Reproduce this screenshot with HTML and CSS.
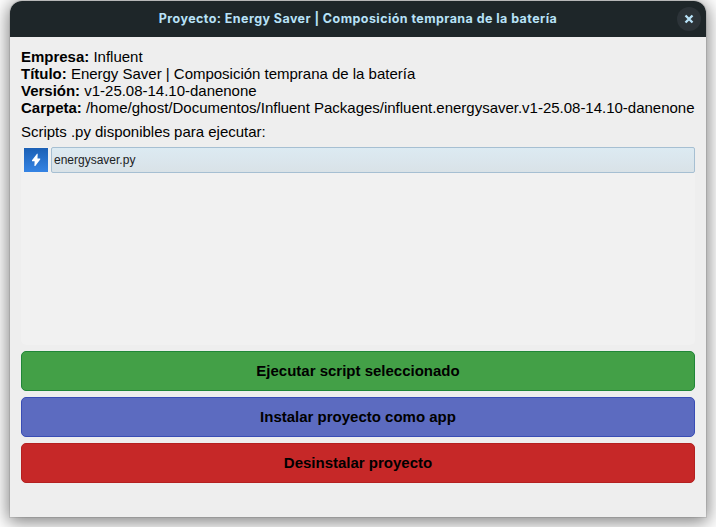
FILE: index.html
```html
<!DOCTYPE html>
<html lang="es">
<head>
<meta charset="utf-8">
<title>Energy Saver</title>
<link rel="stylesheet" href="styles.css">
</head>
<body>
<main class="window">
  <header class="titlebar">
    <h1 class="title">Proyecto: Energy Saver | Composición temprana de la batería</h1>
    <button class="close" aria-label="Cerrar"><svg width="10" height="10" viewBox="0 0 10 10"><path d="M1.5 1.5l7 7M8.5 1.5l-7 7"/></svg></button>
  </header>
  <section class="content">
    <div class="info">
      <div><b>Empresa:</b> Influent</div>
      <div><b>Título:</b> Energy Saver | Composición temprana de la batería</div>
      <div><b>Versión:</b> v1-25.08-14.10-danenone</div>
      <div><b>Carpeta:</b> /home/ghost/Documentos/Influent Packages/influent.energysaver.v1-25.08-14.10-danenone</div>
    </div>
    <div class="label">Scripts .py disponibles para ejecutar:</div>
    <div class="list">
      <div class="item">
        <svg class="icon" width="24" height="24" viewBox="0 0 24 24"><path d="M13 5.8L8 12.3v.9h2.6l-.2 4.8h.9l4.9-6.5v-.9h-2.7l.2-4.8z"/></svg>
        <div class="name">energysaver.py</div>
      </div>
    </div>
    <button class="action run">Ejecutar script seleccionado</button>
    <button class="action install">Instalar proyecto como app</button>
    <button class="action remove">Desinstalar proyecto</button>
  </section>
</main>
</body>
</html>
```
FILE: styles.css
```css
* { box-sizing: border-box; }
body {
  margin: 0;
  padding: 1px 10px 10px;
  height: 527px;
  overflow: hidden;
  background: #fff;
  font: 15px/17px "Liberation Sans", Arial, sans-serif;
  color: #000;
}
.window {
  height: 516px;
  background: #eee;
  border-radius: 12px 12px 0 0;
  box-shadow: 0 0 0 1px rgba(0,0,0,.08), 0 3px 18px 2px rgba(0,0,0,.5);
}
.titlebar {
  display: grid;
  grid-template-columns: 36px 1fr 36px;
  align-items: center;
  height: 36px;
  background: #1e2629;
  border-radius: 12px 12px 0 0;
}
.title {
  grid-column: 2;
  margin: 0;
  padding-bottom: 1px;
  font: 700 12.5px/18px Inter, sans-serif;
  letter-spacing: .43px;
  text-align: center;
  white-space: nowrap;
  color: #b8e2f8;
}
.close {
  display: grid;
  place-items: center;
  width: 24px;
  height: 24px;
  margin-left: 7px;
  padding: 0;
  border: 0;
  border-radius: 50%;
  background: #2c3338;
}
.close path { stroke: #b8e2f8; stroke-width: 2.3; fill: none; }
.content { padding: 11px 11px 0; }
.info { white-space: nowrap; letter-spacing: -.012px; }
.label { margin: 7px 0; letter-spacing: -.012px; }
.list {
  height: 198px;
  margin-bottom: 6px;
  background: #f1f1f1;
  border-radius: 5px;
}
.item { display: flex; align-items: center; gap: 3px; padding: 0 0 0 3px; }
.icon { background: linear-gradient(#1b60b5, #3584e4); fill: #fff; }
.name {
  flex: 1;
  height: 26px;
  padding-left: 2px;
  border: 1px solid #a6bfd2;
  border-radius: 2px;
  background: linear-gradient(#dceaf2, #d9e2e7);
  font-size: 12px;
  line-height: 24px;
  color: #1b2224;
}
.action {
  display: block;
  width: 100%;
  height: 40px;
  margin-bottom: 6px;
  padding: 0 0 2px;
  border: 1px solid;
  border-radius: 5px;
  font: 700 15px/17px "Liberation Sans", Arial, sans-serif;
  color: #000;
}
.run { background: #43a047; border-color: #208638; }
.install { background: #5c6bc0; border-color: #394db5; }
.remove { background: #c62828; border-color: #b42020; }
```
